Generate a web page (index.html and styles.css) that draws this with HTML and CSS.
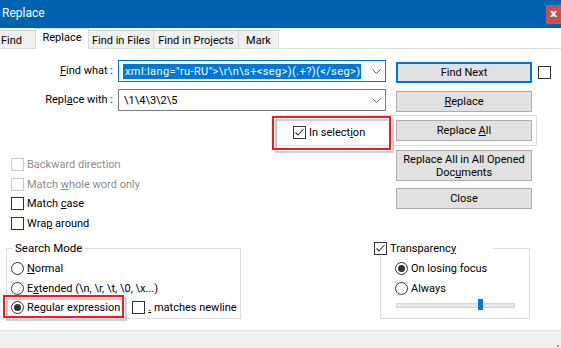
FILE: index.html
```html
<!DOCTYPE html>
<html>
<head>
<meta charset="utf-8">
<link rel="stylesheet" href="styles.css">
</head>
<body>
<div class="win">
  <div class="titlebar">
    <span class="title">Replace</span>
    <span class="close">x</span>
  </div>
  <div class="tabs">
    <div class="tab t-find">Find</div>
    <div class="tab active t-replace">Replace</div>
    <div class="tab t-files">Find in Files</div>
    <div class="tab t-proj">Find in Projects</div>
    <div class="tab t-mark">Mark</div>
  </div>
  <div class="content">
    <div class="row r1">
      <label class="flabel"><u>F</u>ind what :</label>
      <div class="combo focus">
        <span class="seltext">xml:lang="ru-RU"&gt;\r\n\s+&lt;seg&gt;)(.+?)(&lt;/seg&gt;)</span>
        <svg class="chev" width="9" height="5" viewBox="0 0 9 5"><path d="M0.5 0.5 L4.5 4.5 L8.5 0.5" fill="none" stroke="#5f5f5f" stroke-width="1"/></svg>
      </div>
      <div class="btn primary b-next">Find Next</div>
      <span class="cb cb-side"></span>
    </div>
    <div class="row r2">
      <label class="flabel">Repl<u>a</u>ce with :</label>
      <div class="combo">
        <span class="plaintext">\1\4\3\2\5</span>
        <svg class="chev" width="9" height="5" viewBox="0 0 9 5"><path d="M0.5 0.5 L4.5 4.5 L8.5 0.5" fill="none" stroke="#5f5f5f" stroke-width="1"/></svg>
      </div>
      <div class="btn b-rep"><u>R</u>eplace</div>
    </div>
    <div class="row r3">
      <div class="selframe">
        <div class="insel">
          <span class="cb checked"><svg width="11" height="11" viewBox="0 0 11 11"><path d="M1.5 5.5 L4 8 L9.5 2" fill="none" stroke="#333" stroke-width="1.1"/></svg></span>
          <span class="cblabel">In select<u>i</u>on</span>
          <span class="mark m-insel"></span>
        </div>
        <div class="btn b-all">Replace <u>A</u>ll</div>
      </div>
    </div>
    <div class="row r4">
      <div class="opts">
        <div class="opt disabled"><span class="cb"></span><span class="cblabel">Backward direction</span></div>
        <div class="opt disabled"><span class="cb"></span><span class="cblabel">Match <u>w</u>hole word only</span></div>
        <div class="opt"><span class="cb"></span><span class="cblabel">Match <u>c</u>ase</span></div>
        <div class="opt"><span class="cb"></span><span class="cblabel">Wra<u>p</u> around</span></div>
      </div>
      <div class="btncol">
        <div class="btn b-allopen"><span class="ln">Replace All in All Opened</span><span class="ln">Doc<u>u</u>ments</span></div>
        <div class="btn b-close">Close</div>
      </div>
    </div>
    <div class="row r5">
      <fieldset class="group g-mode">
        <legend class="glegend">Search Mode</legend>
        <div class="items">
          <div class="item"><span class="rb"></span><span class="cblabel"><u>N</u>ormal</span></div>
          <div class="item"><span class="rb"></span><span class="cblabel">E<u>x</u>tended (\n, \r, \t, \0, \x...)</span></div>
          <div class="item">
            <div class="regex">
              <span class="rb on"></span><span class="cblabel">Re<u>g</u>ular expression</span>
              <span class="mark m-regex"></span>
            </div>
            <span class="cb cb-nl"></span><span class="cblabel"><u>.</u> matches newline</span>
          </div>
        </div>
      </fieldset>
      <fieldset class="group g-trans">
        <legend class="tlegend"><span class="cb checked"><svg width="11" height="11" viewBox="0 0 11 11"><path d="M1.5 5.5 L4 8 L9.5 2" fill="none" stroke="#333" stroke-width="1.1"/></svg></span><span class="cblabel">Transparenc<u>y</u></span></legend>
        <div class="items">
          <div class="item"><span class="rb on"></span><span class="cblabel">On losing focus</span></div>
          <div class="item"><span class="rb"></span><span class="cblabel">Always</span></div>
          <div class="slider"><div class="track"></div><div class="thumb"></div></div>
        </div>
      </fieldset>
    </div>
  </div>
  <div class="footer">
    <svg class="grip" width="3" height="3" viewBox="0 0 3 3"><rect x="0" y="0" width="2" height="2" fill="#a0a0a0"/></svg>
  </div>
</div>
</body>
</html>
```
FILE: styles.css
```css
* { box-sizing: border-box; }
html, body { margin: 0; padding: 0; background: #ffffff; }
body {
  font-family: Roboto, "Liberation Sans", sans-serif;
  font-size: 11px;
  color: #000;
}
u { text-decoration: underline; text-underline-offset: 1px; text-decoration-thickness: 1px; }
.win { width: 561px; height: 348px; overflow: hidden; display: flex; flex-direction: column; }

/* title bar */
.titlebar {
  height: 28px;
  background: #0063b1;
  display: flex;
  justify-content: space-between;
  align-items: flex-start;
  flex: none;
}
.title { color: #fff; font-size: 12px; line-height: 27px; padding-left: 2px; }
.close {
  margin-top: 5px;
  width: 15px; height: 19px;
  background: #c75050;
  color: #fff;
  font-weight: bold;
  font-size: 11px;
  line-height: 18px;
  text-align: center;
  font-family: "DejaVu Sans", sans-serif;
}

/* tabs */
.tabs {
  height: 21px;
  flex: none;
  display: flex;
  align-items: flex-end;
  border-bottom: 1px solid #d9d9d9;
}
.tab {
  height: 18px;
  background: #f0f0f0;
  border: 1px solid #d9d9d9;
  border-bottom: none;
  border-left: none;
  text-align: center;
  line-height: 19px;
  font-size: 11px;
  white-space: nowrap;
}
.tab.active {
  height: 21px;
  background: #fff;
  border-left: 1px solid #d9d9d9;
  margin-bottom: -1px;
  line-height: 18px;
  margin-left: -1px;
}
.t-find { width: 36px; text-align: left; padding-left: 1px; }
.t-replace { width: 54px; }
.t-files { width: 65px; }
.t-proj { width: 85px; }
.t-mark { width: 40px; }

/* content */
.content { height: 281px; flex: none; display: flex; flex-direction: column; }
.row { display: flex; align-items: flex-start; flex: none; }
.r1 { margin-top: 11px; height: 22px; }
.r2 { margin-top: 7px; height: 22px; }
.r3 { margin-top: 4px; }
.r4 { margin-top: 4px; }
.r5 { margin-top: 4px; }

.flabel { width: 113px; text-align: right; line-height: 22px; white-space: nowrap; }
.combo {
  margin-left: 5px;
  width: 268px; height: 22px;
  border: 1px solid #7a7a7a;
  background: #fff;
  display: flex; align-items: center;
  position: relative;
  padding-left: 4px;
}
.combo.focus { border-color: #0078d7; }
.seltext {
  background: #0078d7; color: #fff;
  line-height: 15px;
  padding: 0 1px 0 2px;
  white-space: nowrap;
  letter-spacing: 0.4px;
}
.plaintext { white-space: nowrap; padding-left: 1px; }
.chev { margin-left: auto; margin-right: 4px; }

.btn {
  width: 136px; height: 21px;
  background: #e1e1e1;
  border: 1px solid #adadad;
  text-align: center;
  line-height: 19px;
  white-space: nowrap;
  flex: none;
}
.btn.primary { border: 2px solid #0078d7; line-height: 17px; }
.b-next { margin-left: 10px; margin-top: 2px; }
.b-rep { margin-left: 10px; margin-top: 2px; }
.cb-side { margin-left: 6px; margin-top: 6px; }

.cb {
  width: 13px; height: 13px;
  border: 1px solid #333;
  background: #fff;
  flex: none;
  display: inline-flex; align-items: center; justify-content: center;
}
.rb {
  width: 13px; height: 13px;
  border: 1px solid #333;
  border-radius: 50%;
  background: #fff;
  flex: none;
  display: inline-flex; align-items: center; justify-content: center;
}
.rb.on::after {
  content: "";
  width: 7px; height: 7px; border-radius: 50%;
  background: #333;
}
.cblabel { margin-left: 3px; white-space: nowrap; line-height: 13px; }

/* in selection frame */
.selframe {
  margin-left: 276px;
  width: 261px; height: 31px;
  border: 1px solid #dedede;
  display: flex; align-items: flex-start;
  padding: 4px 4px 0 16px;
}
.insel { display: flex; align-items: center; position: relative; margin-top: 6px; }
.b-all { margin-left: auto; }

.mark {
  position: absolute;
  border: 2px solid #ec1c24;
}
.mark::after {
  content: "";
  position: absolute;
  left: 1px; top: 1px; right: -5px; bottom: -5px;
  border: 2px solid rgba(120,120,120,0.35);
}
.m-insel { left: -21px; top: -10px; width: 119px; height: 34px; }
.m-regex { left: -8px; top: -6px; width: 121px; height: 23px; }

/* options */
.opts { width: 396px; padding-left: 11px; padding-top: 8px; display: flex; flex-direction: column; }
.opt { display: flex; align-items: center; height: 13px; margin-bottom: 6.5px; }
.opt.disabled .cb { border-color: #cccccc; }
.opt.disabled .cblabel { color: #8d8d8d; }
.btncol { display: flex; flex-direction: column; }
.b-allopen { height: 31px; display: flex; flex-direction: column; justify-content: center; align-items: center; line-height: 13px; }
.ln { display: block; height: 13px; }
.b-close { margin-top: 7px; }

/* groups */
.group {
  margin: 0;
  padding: 0;
  border: 1px solid #dcdcdc;
  height: 79px;
  min-width: 0;
}
.g-mode { margin-left: 6px; width: 235px; padding-left: 4px; }
.g-trans { margin-left: 139px; width: 150px; padding-left: 14px; }
.glegend { padding: 0 2px; margin-left: 2px; line-height: 16px; font-size: 11.5px; }
.tlegend {
  padding: 0;
  margin-left: -21px;
  width: 119px;
  height: 16px;
  display: flex; align-items: center;
  background: #fff;
}
.items { display: flex; flex-direction: column; padding-top: 6px; }
.item { display: flex; align-items: center; height: 13px; margin-bottom: 6.5px; }
.regex { display: flex; align-items: center; position: relative; }
.cb-nl { margin-left: 12px; }
.slider { position: relative; width: 119px; height: 11px; margin-left: 1px; margin-top: -2px; }
.track {
  position: absolute; left: 0; right: 0; top: 4px; height: 5px;
  background: #e7e7e7; border: 1px solid #d6d6d6;
}
.thumb {
  position: absolute; left: 82px; top: 0; width: 5px; height: 11px;
  background: #0078d7;
}

/* footer */
.footer {
  height: 19px;
  flex: none;
  background: #f0f0f0;
  border-top: 1px solid #dfdfdf;
  display: flex; justify-content: flex-end; align-items: flex-end;
}
.grip { margin: 0 1px 1px 0; }
```
